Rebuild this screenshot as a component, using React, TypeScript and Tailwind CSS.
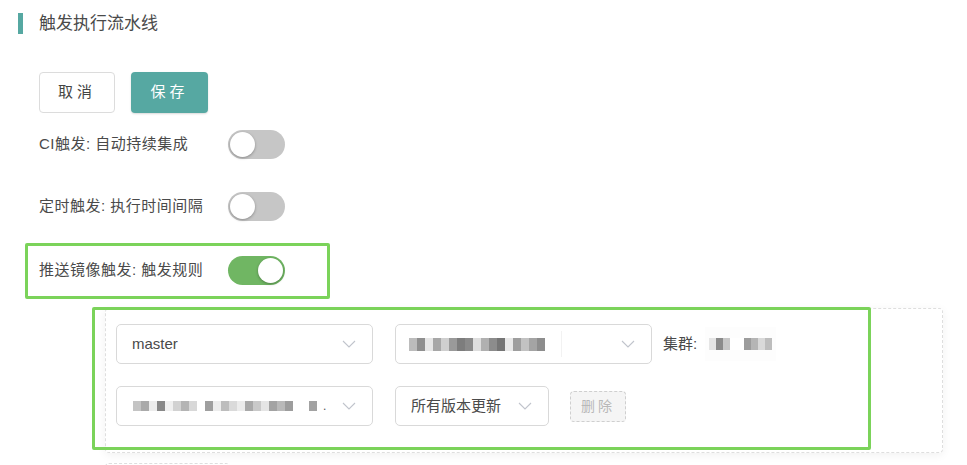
import React from "react";

const FONT = {
  fontFamily: '"Liberation Sans", "Noto Sans CJK SC", sans-serif',
};

// pixelated (blurred) values in the screenshot
const BRANCH_BLOCKS: string[] = [
  "bg-[#bcbcbc]", "bg-[#8f8f8f]", "bg-[#e6e6e6]", "bg-[#a7a7a7]", "bg-[#cfcfcf]",
  "bg-[#9a9a9a]", "bg-[#7d7d7d]", "bg-[#8a8a8a]", "bg-[#dedede]", "bg-[#b0b0b0]",
  "bg-[#8c8c8c]", "bg-[#757575]", "bg-[#e8e8e8]", "bg-[#9e9e9e]", "bg-[#c2c2c2]",
  "bg-[#a4a4a4]", "bg-[#8d8d8d]",
];

const IMAGE_BLOCKS: string[] = [
  "bg-[#c4c4c4]", "bg-[#aaaaaa]", "bg-[#ececec]", "bg-[#888888]", "bg-[#f0f0f0]",
  "bg-[#d2d2d2]", "bg-[#b4b4b4]", "bg-[#d8d8d8]", "bg-[#ffffff]", "bg-[#9f9f9f]",
  "bg-[#ededed]", "bg-[#bdbdbd]", "bg-[#dadada]", "bg-[#ececec]", "bg-[#a9a9a9]",
  "bg-[#c9c9c9]", "bg-[#e5e5e5]", "bg-[#a3a3a3]", "bg-[#b9b9b9]", "bg-[#9d9d9d]",
  "bg-[#ffffff]", "bg-[#ffffff]", "bg-[#a2a2a2]",
];

const CLUSTER_BLOCKS: string[] = [
  "bg-[#e5e5e5]", "bg-[#8b8b8b]", "bg-[#c7c7c7]", "bg-[#ffffff]", "bg-[#ffffff]",
  "bg-[#9c9c9c]", "bg-[#b5b5b5]", "bg-[#d9d9d9]", "bg-[#bdbdbd]",
];

function Mosaic({ blocks, size = "w-[7px] h-[13px]" }: { blocks: string[]; size?: string }) {
  return (
    <div className="flex items-center">
      {blocks.map((c, i) => (
        <span key={i} className={`${size} ${c}`} />
      ))}
    </div>
  );
}

function Chevron() {
  return (
    <svg width="14" height="8" viewBox="0 0 14 8" fill="none" className="shrink-0">
      <path d="M1 1l6 6 6-6" stroke="#c0c4cc" strokeWidth="1.1" />
    </svg>
  );
}

function Toggle({ on }: { on?: boolean }) {
  return (
    <div
      className={`w-[57px] h-[29px] rounded-full p-[2px] flex items-center ${
        on ? "bg-[#70b663] justify-end" : "bg-[#c6c6c6] justify-start"
      }`}
    >
      <span className="w-[25px] h-[25px] rounded-full bg-white shadow-[0_1px_3px_rgba(0,0,0,0.3)]" />
    </div>
  );
}

function SwitchRow({ label, on }: { label: string; on?: boolean }) {
  return (
    <div className="flex items-center h-[29px]">
      <span className="w-[189px] text-[15px] tracking-[0.5px] text-[#4a4a4a]">{label}</span>
      <Toggle on={on} />
    </div>
  );
}

export default function App() {
  return (
    <div className="relative w-full h-[465px] overflow-hidden bg-white" style={FONT}>
      <div className="flex items-center pt-[13px] pl-[18px]">
        <span className="w-[5px] h-[21px] bg-[#56a8a2]" />
        <span className="ml-[16px] text-[17px] text-[#4a4a4a] leading-[21px]">
          触发执行流水线
        </span>
      </div>

      <div className="pl-[39px]">
        <div className="flex gap-[16px] mt-[38px]">
          <button className="w-[76px] h-[41px] rounded-[4px] border border-[#dcdcdc] bg-white text-[15px] text-[#444] tracking-[4px]">
            取消
          </button>
          <button className="w-[77px] h-[41px] rounded-[4px] bg-[#56a8a2] text-[15px] text-white tracking-[4px] shadow-[0_1px_2px_rgba(0,0,0,0.15)]">
            保存
          </button>
        </div>

        <div className="flex flex-col mt-[17px] gap-[33px]">
          <SwitchRow label="CI触发: 自动持续集成" />
          <SwitchRow label="定时触发: 执行时间间隔" />
        </div>
        <div className="mt-[35px]">
          <SwitchRow label="推送镜像触发: 触发规则" on />
        </div>
      </div>

      <div className="ml-[105px] mt-[23px] w-[838px] rounded-[4px] border border-dashed border-[#dedede] shadow-[0_2px_10px_rgba(0,0,0,0.06)] pl-[10px] pt-[15px] pb-[26px] flex flex-col gap-[22px]">
        <div className="flex items-center">
          <div className="w-[257px] h-[40px] rounded-[5px] border border-[#d9d9d9] flex items-center justify-between pl-[15px] pr-[16px]">
            <span className="text-[15px] text-[#4a4a4a]">master</span>
            <Chevron />
          </div>
          <div className="ml-[22px] w-[257px] h-[40px] rounded-[5px] border border-[#d9d9d9] flex items-center justify-between pl-[13px] pr-[16px]">
            <div className="flex items-center">
              <Mosaic blocks={BRANCH_BLOCKS} size="w-[8px] h-[13px]" />
              <span className="ml-[16px] w-px h-[26px] bg-[#f2f2f2]" />
            </div>
            <Chevron />
          </div>
          <span className="ml-[11px] text-[15px] text-[#4a4a4a]">集群:</span>
          <div className="ml-[8px] h-[34px] px-[4px] flex items-center bg-[#fdfdfd]">
            <Mosaic blocks={CLUSTER_BLOCKS} size="w-[7px] h-[12px]" />
          </div>
        </div>

        <div className="flex items-center">
          <div className="w-[257px] h-[40px] rounded-[5px] border border-[#d9d9d9] flex items-center justify-between pl-[16px] pr-[16px]">
            <div className="flex items-center">
              <Mosaic blocks={IMAGE_BLOCKS} size="w-[8px] h-[10px]" />
              <span className="ml-[6px] text-[12px] text-[#555]">.</span>
            </div>
            <Chevron />
          </div>
          <div className="ml-[22px] w-[154px] h-[40px] rounded-[5px] border border-[#d9d9d9] flex items-center justify-between pl-[15px] pr-[16px]">
            <span className="text-[15px] text-[#4a4a4a]">所有版本更新</span>
            <Chevron />
          </div>
          <button className="ml-[21px] w-[56px] h-[31px] rounded-[4px] border border-dashed border-[#cfcfcf] bg-[#f5f5f5] text-[14px] text-[#b8b8b8] tracking-[3px]">
            删除
          </button>
        </div>
      </div>

      <div className="ml-[105px] mt-[10px] w-[125px] h-[20px] rounded-[4px] border border-dashed border-[#dedede]" />

      {/* highlight annotations */}
      <div className="absolute left-[25px] top-[243px] w-[305px] h-[56px] border-[3px] border-[#7bd35a] rounded-[2px]" />
      <div className="absolute left-[92px] top-[307px] w-[779px] h-[143px] border-[3px] border-[#7bd35a] rounded-[2px]" />
    </div>
  );
}
